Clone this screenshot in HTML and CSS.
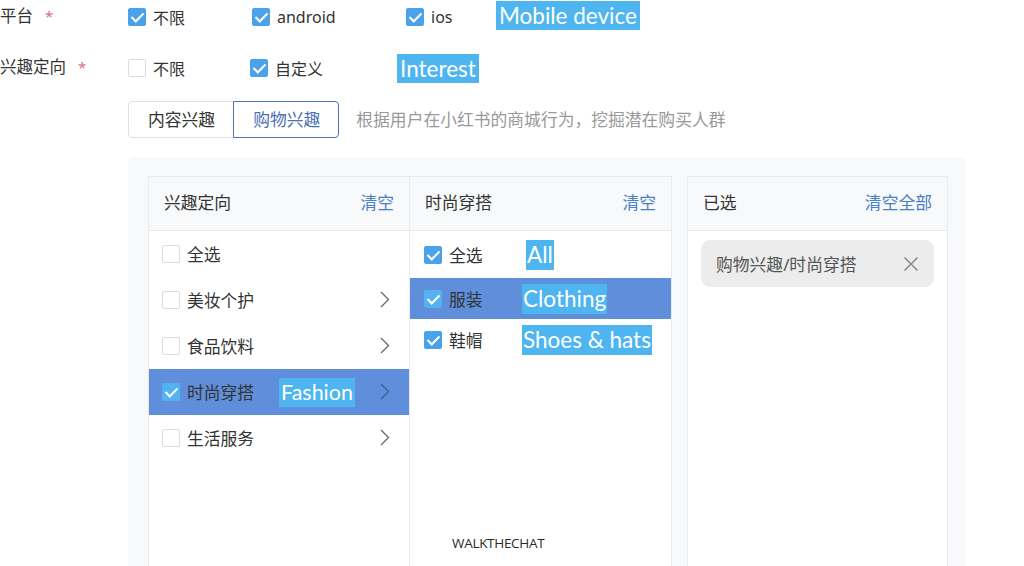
FILE: index.html
```html
<!DOCTYPE html>
<html lang="zh">
<head>
    <meta charset="UTF-8" />
    <title>兴趣定向</title>
    <link rel="stylesheet" href="styles.css">
</head>
<body>
    <div class="form-row">
        <div class="label">平台<i class="star">*</i></div>
        <div class="opts opts-platform">
            <label class="opt"><span class="cb on"></span>不限</label>
            <label class="opt"><span class="cb on"></span>android</label>
            <label class="opt"><span class="cb on"></span>ios</label>
            <span class="note note-big">Mobile device</span>
        </div>
    </div>
    <div class="form-row row2">
        <div class="label">兴趣定向<i class="star">*</i></div>
        <div class="opts opts-interest">
            <label class="opt"><span class="cb"></span>不限</label>
            <label class="opt"><span class="cb on"></span>自定义</label>
            <span class="note note-big">Interest</span>
        </div>
    </div>

    <div class="tabs-row">
        <div class="tabs">
            <span class="tab">内容兴趣</span>
            <span class="tab active">购物兴趣</span>
        </div>
        <span class="hint">根据用户在小红书的商城行为，挖掘潜在购买人群</span>
    </div>

    <div class="panel">
        <div class="col col1">
            <div class="col-head">兴趣定向<a href="#">清空</a></div>
            <ul class="list">
                <li><span class="cb"></span>全选</li>
                <li><span class="cb"></span>美妆个护<svg class="arrow" width="10" height="17" viewBox="0 0 10 17"><path d="M1 1L8.5 8.5L1 16" stroke="#666" stroke-width="1.3" fill="none"/></svg></li>
                <li><span class="cb"></span>食品饮料<svg class="arrow" width="10" height="17" viewBox="0 0 10 17"><path d="M1 1L8.5 8.5L1 16" stroke="#666" stroke-width="1.3" fill="none"/></svg></li>
                <li class="sel"><span class="cb on"></span>时尚穿搭<span class="note note-fashion">Fashion</span><svg class="arrow" width="10" height="17" viewBox="0 0 10 17"><path d="M1 1L8.5 8.5L1 16" stroke="#3d5d96" stroke-width="1.3" fill="none"/></svg></li>
                <li><span class="cb"></span>生活服务<svg class="arrow" width="10" height="17" viewBox="0 0 10 17"><path d="M1 1L8.5 8.5L1 16" stroke="#666" stroke-width="1.3" fill="none"/></svg></li>
            </ul>
        </div>
        <div class="col col2">
            <div class="col-head">时尚穿搭<a href="#">清空</a></div>
            <ul class="list list2">
                <li class="first"><span class="cb on"></span>全选<span class="note note-sub note-all">All</span></li>
                <li class="sel"><span class="cb on"></span>服装<span class="note note-sub">Clothing</span></li>
                <li><span class="cb on"></span>鞋帽<span class="note note-sub">Shoes &amp; hats</span></li>
            </ul>
            <div class="mark">WALKTHECHAT</div>
        </div>
        <div class="col col3">
            <div class="col-head">已选<a href="#">清空全部</a></div>
            <div class="chosen">
                <span class="chip">购物兴趣/时尚穿搭
                    <svg width="16" height="16" viewBox="0 0 16 16"><path d="M1.5 1.5L14.5 14.5M14.5 1.5L1.5 14.5" stroke="#8c8c8c" stroke-width="1.6" fill="none"/></svg>
                </span>
            </div>
        </div>
    </div>
</body>
</html>
```

FILE: styles.css
```css
*{
    padding:0;
    margin:0;
    list-style:none;
    box-sizing:border-box;
}
body{
    font-family:"Noto Sans","Noto Sans CJK SC",sans-serif;
    font-size:16px;
    color:#333;
    background:#fff;
    overflow:hidden;
}
.form-row{
    display:flex;
    align-items:center;
    height:34px;
}
.row2{
    margin-top:17px;
}
.label{
    width:128px;
    margin-top:-4px;
    font-size:16.5px;
}
.star{
    font-style:normal;
    color:#d9707a;
    margin-left:12px;
    font-size:15px;
}
.opts{
    display:grid;
    align-items:center;
}
.opts-platform{
    grid-template-columns:124px 154px 90px auto;
}
.opts-interest{
    grid-template-columns:122px 147px auto;
}
.opt{
    display:flex;
    align-items:center;
    color:#333;
}
.cb{
    width:18px;
    height:18px;
    border:1px solid #dcdcdc;
    border-radius:2px;
    background:#fff;
    margin-right:7px;
    position:relative;
    flex:none;
}
.cb.on{
    background:#4aa3ea;
    border-color:#4aa3ea;
}
.cb.on:after{
    content:'';
    position:absolute;
    left:5px;
    top:1px;
    width:5px;
    height:10px;
    border:solid #fff;
    border-width:0 2px 2px 0;
    transform:rotate(45deg);
}
.note{
    background:#4eb5f0;
    color:#fff;
    font-family:Lato,"Open Sans",sans-serif;
    white-space:nowrap;
}
.note-big{
    font-size:22.5px;
    line-height:29px;
    padding:0 3px;
    justify-self:start;
}
.opts-platform .note-big{
    margin-top:-4px;
}
.tabs-row{
    display:flex;
    align-items:center;
    margin:16px 0 0 128px;
    font-size:16.8px;
}
.tabs{
    display:flex;
}
.tab{
    height:37px;
    line-height:35px;
    padding:0 18px 0 19px;
    border:1px solid #dcdfe6;
    border-radius:4px 0 0 4px;
    color:#333;
}
.tab.active{
    border-color:#4c73c0;
    border-radius:0 4px 4px 0;
    color:#4c6fb5;
    margin-left:-1px;
}
.hint{
    color:#999;
    margin-left:17px;
    margin-top:-2px;
}
.panel{
    margin:19px 0 0 128px;
    width:838px;
    height:420px;
    background:#f8f9fb;
    border-radius:6px;
    padding:19px 18px 0 20px;
    display:flex;
    font-size:16.8px;
}
.col{
    width:262px;
    flex:none;
    background:#fff;
    border:1px solid #e8eaee;
    display:flex;
    flex-direction:column;
}
.col2{
    border-left:none;
    position:relative;
}
.col3{
    margin-left:15px;
    width:261px;
}
.col-head{
    height:54px;
    background:#f8f9fb;
    border-bottom:1px solid #e8eaee;
    display:flex;
    align-items:center;
    justify-content:space-between;
    padding:0 15px 3px;
}
.col-head a{
    color:#4a7fc4;
    text-decoration:none;
}
.list li{
    height:46px;
    display:flex;
    align-items:center;
    padding-left:13px;
    position:relative;
}
.list li.sel{
    background:#5f8fdb;
}
.list li.sel .cb{
    background:#52b2f2;
    border-color:#52b2f2;
}
.arrow{
    position:absolute;
    right:19px;
    top:14px;
}
.note-fashion{
    position:absolute;
    left:130px;
    top:9px;
    font-size:21.5px;
    line-height:29px;
    padding:0 2px;
}
.list2 li{
    height:41px;
    padding-left:14px;
}
.list2 li.first{
    height:47px;
}
.note-sub{
    position:absolute;
    left:112px;
    font-size:22.5px;
    line-height:30px;
    padding:0 1px;
}
.note-sub.note-all{
    left:116px;
}
.mark{
    position:absolute;
    left:42px;
    top:357px;
    font-family:"Open Sans",sans-serif;
    font-size:13.5px;
    letter-spacing:-0.3px;
    color:#2b2b2b;
}
.chosen{
    padding:9px 13px;
}
.chip{
    display:flex;
    align-items:center;
    justify-content:space-between;
    height:47px;
    background:#ececec;
    border-radius:9px;
    padding:0 15px;
    color:#555;
}
```
